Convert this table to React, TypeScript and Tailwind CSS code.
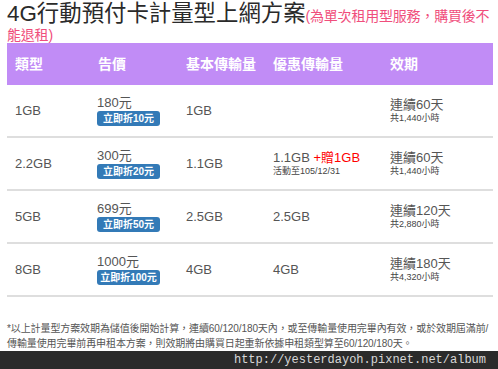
import React from "react";

const font = { fontFamily: '"Liberation Sans", Arial, "Noto Sans CJK TC", sans-serif' };

type Row = {
  type: string;
  price: string;
  off: string;
  base: string;
  promo?: { main: string; gift: string; note: string };
  days: string;
  hours: string;
};

const rows: Row[] = [
  { type: "1GB", price: "180元", off: "10元", base: "1GB", days: "連續60天", hours: "共1,440小時" },
  {
    type: "2.2GB",
    price: "300元",
    off: "20元",
    base: "1.1GB",
    promo: { main: "1.1GB ", gift: "+贈1GB", note: "活動至105/12/31" },
    days: "連續60天",
    hours: "共1,440小時",
  },
  { type: "5GB", price: "699元", off: "50元", base: "2.5GB", promo: { main: "2.5GB", gift: "", note: "" }, days: "連續120天", hours: "共2,880小時" },
  { type: "8GB", price: "1000元", off: "100元", base: "4GB", promo: { main: "4GB", gift: "", note: "" }, days: "連續180天", hours: "共4,320小時" },
];

const cols = "grid grid-cols-[83px_88px_87px_117px_111px]";

export default function App() {
  return (
    <div className="w-[498px] h-[369px] bg-white flex flex-col overflow-hidden" style={font}>
      <div className="pl-[7px] pr-[3px] text-[14px] leading-[15px] text-[#f04e7c] h-[43px]">
        <span className="text-[22.4px] leading-[28px] text-[#2a2a2a] align-baseline">4G行動預付卡計量型上網方案</span>
        <span className="tracking-[-0.2px]">(為單次租用型服務，購買後不能退租)</span>
      </div>

      <div className="ml-[7px] w-[486px]">
        <div className={`${cols} h-[42px] items-center bg-[#c18cf6] text-white font-bold text-[14px]`}>
          <div className="pl-[8px]">類型</div>
          <div className="pl-[8px]">告價</div>
          <div className="pl-[8px]">基本傳輸量</div>
          <div className="pl-[8px]">優惠傳輸量</div>
          <div className="pl-[8px]">效期</div>
        </div>
        {rows.map((r) => (
          <div key={r.type} className={`${cols} h-[53px] items-center border-b-2 border-[#dedede] text-[#555] text-[13px]`}>
            <div className="pl-[8px]">{r.type}</div>
            <div className="pl-[7px] flex flex-col items-start">
              <div className="leading-[15px]">{r.price}</div>
              <div className="mt-[1px] w-[63px] h-[15px] rounded-[3px] bg-[#337ab7] text-white text-[10px] font-bold leading-[15px] text-center">
                立即折{r.off}
              </div>
            </div>
            <div className="pl-[8px]">{r.base}</div>
            <div className="pl-[8px] flex flex-col">
              {r.promo && (
                <>
                  <div className="leading-[16px]">
                    {r.promo.main}
                    {r.promo.gift && <span className="text-[#f00]">{r.promo.gift}</span>}
                  </div>
                  {r.promo.note && <div className="text-[9px] leading-[11px] text-[#444]">{r.promo.note}</div>}
                </>
              )}
            </div>
            <div className="pl-[8px] flex flex-col">
              <div className="leading-[16px]">{r.days}</div>
              <div className="text-[9px] leading-[11px] text-[#444]">{r.hours}</div>
            </div>
          </div>
        ))}
      </div>

      <div className="ml-[7px] mt-[24px] w-[486px] text-[10px] leading-[15px] text-[#555] tracking-[-0.1px]">
        *以上計量型方案效期為儲值後開始計算，連續60/120/180天內，或至傳輸量使用完畢內有效，或於效期屆滿前/傳輸量使用完畢前再申租本方案，則效期將由購買日起重新依據申租類型算至60/120/180天。
      </div>

      <div className="mt-auto h-[21px] bg-[#2b2b2b] flex items-center justify-end pr-[12px]">
        <span className="text-[12px] text-[#d8d8d8]" style={{ fontFamily: '"Liberation Mono", "Courier New", monospace' }}>
          http://yesterdayoh.pixnet.net/album
        </span>
      </div>
    </div>
  );
}
